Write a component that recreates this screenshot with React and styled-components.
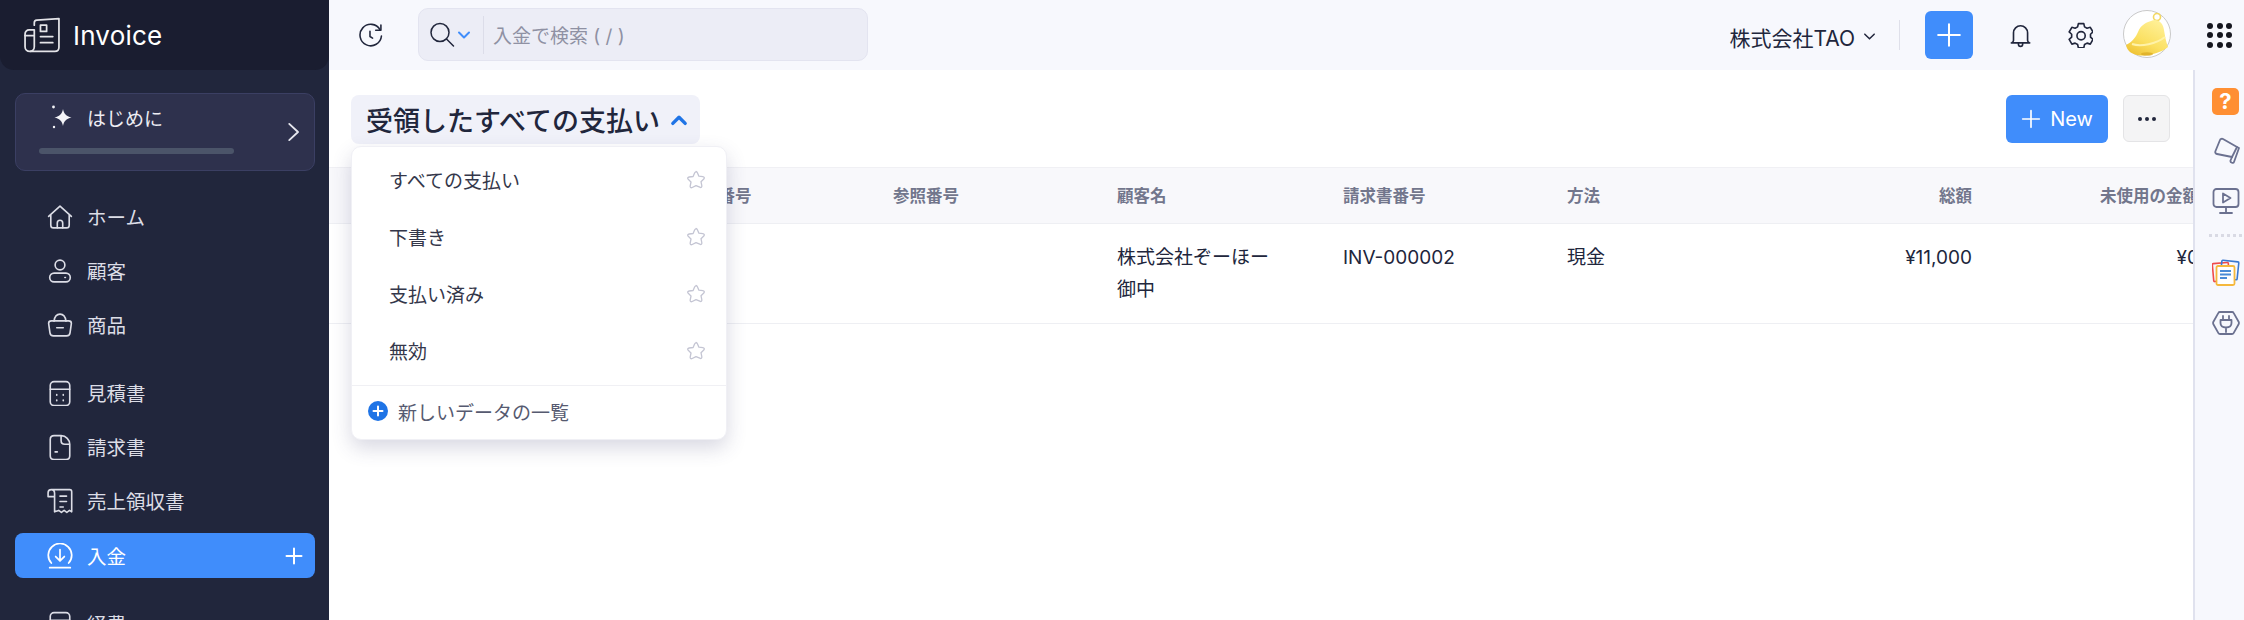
import React from "react";
import styled, { createGlobalStyle } from "styled-components";

const FONT = `Inter, "Noto Sans CJK JP", sans-serif`;

const Global = createGlobalStyle`
  html, body { margin: 0; padding: 0; height: 620px; overflow: hidden; background: #fff; }
  body { font-family: ${FONT}; }
  * { box-sizing: border-box; }
`;

const Shell = styled.div`
  display: grid; grid-template-columns: 329px 1fr; width: 2244px; height: 620px; overflow: hidden;
`;

/* ---------- sidebar ---------- */
const Sidebar = styled.aside`
  background: #21263c; color: #e6e7ee; height: 620px; overflow: hidden; display: flex; flex-direction: column;
`;
const Brand = styled.div`
  height: 70px; flex: none; background: #1a1d30; border-radius: 0 0 14px 14px;
  display: flex; align-items: center; padding-left: 23px; gap: 12px;
  color: #fff; font-size: 26px; letter-spacing: 0.2px;
`;
const StartCard = styled.div`
  margin: 23px 14px 0 15px; height: 78px; flex: none; border-radius: 10px;
  background: #2e314d; border: 1px solid #3b3f63; position: relative;
  display: flex; flex-direction: column; padding: 11px 0 0 23px;
`;
const StartTitle = styled.div`
  display: flex; align-items: center; gap: 13px; padding-left: 11px; height: 24px; font-size: 19px; color: #eeeef4;
`;
const Progress = styled.div`
  margin-top: 19px; width: 195px; height: 6px; border-radius: 3px; background: #4b5469;
`;
const StartArrow = styled.span`
  position: absolute; right: 11px; top: 28px; display: flex;
`;
const Nav = styled.nav`
  margin: 23px 14px 0 15px; display: flex; flex-direction: column; gap: 9px;
`;
const NavGap = styled.div`height: 5px;`;
const NavItem = styled.div`
  height: 45px; flex: none; border-radius: 8px; display: flex; align-items: center;
  padding-left: 32px; gap: 14px; font-size: 19.5px; color: ${p => (p.$active ? "#fff" : "#dcdde6")};
  background: ${p => (p.$active ? "#408dfb" : "transparent")};
  margin-top: ${p => (p.$active ? 1 : 0)}px;
  position: relative;
`;
const NavPlus = styled.span`
  position: absolute; right: 12px; top: 14px; display: flex;
`;

/* ---------- main ---------- */
const Main = styled.div`display: flex; flex-direction: column; min-width: 0; height: 620px;`;
const Topbar = styled.header`
  height: 70px; flex: none; background: #f7f8fd; display: flex; align-items: center; padding-left: 29px;
`;
const SearchBox = styled.div`
  margin-left: 35px; width: 450px; height: 53px; margin-top: -1px; border-radius: 10px; background: #ecedf6; border: 1px solid #e3e4f0;
  display: flex; align-items: center; padding-left: 9px; color: #8f91a3; font-size: 19px;
`;
const SearchDivider = styled.span`
  width: 1px; height: 38px; background: #dcdde9; margin: 0 9px 0 11px;
`;
const TopRight = styled.div`
  margin-left: auto; display: flex; align-items: center; height: 100%;
`;
const OrgName = styled.div`
  display: flex; align-items: center; gap: 7px; font-size: 21px; color: #21263c; margin-top: 3px;
`;
const TopDivider = styled.span`
  width: 1px; height: 30px; background: #dfe0ea; margin: 0 25px 0 22px;
`;
const QuickAdd = styled.button`
  width: 48px; height: 48px; border: 0; padding: 0; border-radius: 6px; background: #408dfb;
  display: flex; align-items: center; justify-content: center;
`;
const TopIcon = styled.span`
  display: flex; width: ${p => p.$w}px; justify-content: center; margin-left: ${p => p.$ml || 0}px;
`;
const Avatar = styled.span`
  width: 48px; height: 48px; margin-left: 30px; display: flex; margin-top: -2px;
`;
const AppsGrid = styled.span`
  margin: 0 12px 0 36px; display: grid; grid-template-columns: repeat(3, 6px); gap: 3.5px;
  span { width: 6px; height: 6px; border-radius: 50%; background: #15161f; display: block; }
`;

const Body = styled.div`display: flex; flex: 1; min-height: 0;`;
const Content = styled.main`flex: 1; min-width: 0; position: relative; overflow: hidden; background: #fff;`;
const Rail = styled.aside`
  width: 51px; flex: none; background: #f7f8fd; border-left: 2px solid #e0e2ee;
  display: flex; flex-direction: column; align-items: center; padding-top: 18px; padding-left: 12px;
`;
const RailIcon = styled.span`display: flex; margin-top: ${p => p.$mt || 0}px;`;
const RailDots = styled.span`
  width: 33px; margin-top: 19px; border-top: 3px dotted #d9dae4; height: 0; display: block;
`;

const PageHead = styled.div`
  height: 97px; display: flex; align-items: flex-start; padding: 25px 23px 0 22px;
`;
const TitleButton = styled.div`
  height: 49px; width: 349px; border-radius: 8px; background: #f0f1f9; display: flex; align-items: center;
  padding-left: 15px; gap: 10px; font-size: 27px; font-weight: 500; color: #21263c; white-space: nowrap;
`;
const NewButton = styled.button`
  margin-left: auto; width: 102px; height: 48px; border: 0; border-radius: 6px; background: #408dfb; color: #fff;
  font: 400 20px ${FONT}; display: flex; align-items: center; justify-content: center; gap: 9px; padding: 0;
`;
const MoreButton = styled.button`
  margin-left: 15px; width: 47px; height: 47px; border: 1px solid #e4e4e6; border-radius: 6px; background: #f4f4f5;
  display: flex; align-items: center; justify-content: center; padding: 0;
`;

const Table = styled.div`width: 1870px;`;
const Row = styled.div`
  display: grid; grid-template-columns: 340px 224px 224px 226px 224px 224px 181px 227px;
  align-items: ${p => (p.$head ? "center" : "start")};
  height: ${p => (p.$head ? 57 : 100)}px;
  background: ${p => (p.$head ? "#f8f8fb" : "#fff")};
  border-top: ${p => (p.$head ? "1px solid #f0f0f4" : "0")};
  border-bottom: 1px solid #eeeff3;
`;
const Head = styled.div`
  font-size: 16.5px; font-weight: 600; color: #72768c; white-space: nowrap; padding-bottom: 2px;
  text-align: ${p => (p.$right ? "right" : "left")};
`;
const Cell = styled.div`
  font-size: 19px; line-height: 32px; color: #21263c; padding-top: 18px;
  text-align: ${p => (p.$right ? "right" : "left")};
  ${p => p.$narrow && "width: 170px;"}
`;

const Dropdown = styled.div`
  position: absolute; left: 22px; top: 76px; width: 376px; height: 294px; background: #fff; border-radius: 10px;
  border: 1px solid #f0f0f5; box-shadow: 0 8px 20px rgba(60, 60, 110, 0.2);
  display: flex; flex-direction: column; padding-top: 4px;
`;
const DropItem = styled.div`
  height: 57px; flex: none; display: flex; align-items: center; justify-content: space-between;
  padding: 0 20px 0 37px; font-size: 19px; color: #34374a;
`;
const DropFoot = styled.div`
  margin-top: 6px; border-top: 1px solid #f0f0f4; flex: 1; display: flex; align-items: center; padding: 0 0 3px 16px;
  gap: 10px; font-size: 19px; color: #565a70;
`;

/* ---------- icons ---------- */
const S = ({ size = 24, w, h, vb = "0 0 24 24", sw = 1.6, color = "currentColor", children }) => (
  <svg width={w || size} height={h || size} viewBox={vb} fill="none" stroke={color} strokeWidth={sw} strokeLinecap="round" strokeLinejoin="round">
    {children}
  </svg>
);
const LogoIcon = () => (
  <S w={38} h={38} vb="0 0 37 37" sw={1.7} color="#e4e4e8">
    <path d="M11 9V6.5c0-1.6.9-2.5 2.4-2.6L35 2.5v28c0 2.5-1.5 4-4 4H7.500" />
    <path d="M11 29V13.500H6c-2.300 0-4 1.700-4 4V30c0 2.700 2 4.500 4.500 4.500s4.500-2 4.500-4.500v-1z" />
    <path d="M2 19h8.500" />
    <rect x="17" y="9" width="6" height="6" />
    <path d="M17 20h12M17 26h12" />
  </S>
);
const Sparkle = () => (
  <svg width="24" height="26" viewBox="0 0 24 26" fill="#f4f4f8">
    <path d="M13 5c1 5 3 7 8.500 8.500C16 15 14 17 13 22c-1-5-3-7-8.500-8.500C10 12 12 10 13 5z" />
    <circle cx="3.500" cy="3" r="1.400" />
    <circle cx="4" cy="23" r="1.200" />
  </svg>
);
const NAV = 26;
const HomeI = () => (
  <S size={NAV} sw={1.5}><path d="M1.500 11.500 12 2l10.500 9.500M3.500 9.800V19.500c0 1.700 1 2.500 2.500 2.500h12c1.500 0 2.500-.8 2.500-2.500V9.800" /><path d="M9.500 22v-4.500a2.500 2.500 0 0 1 5 0V22" /></S>
);
const UserI = () => (
  <S size={NAV} sw={1.5}><circle cx="12" cy="6.500" r="4.500" /><rect x="2.500" y="14" width="19" height="8" rx="4" /><path d="M16.500 18h.5" /></S>
);
const BasketI = () => (
  <S size={NAV} sw={1.5}><path d="M6.500 8.500C7 4.500 9 2 12 2s5 2.500 5.500 6.500" /><path d="M1.500 10.500c0-1.500 1-2.300 2.500-2.300h16c1.500 0 2.500.8 2.500 2.300l-1.200 8.500c-.2 1.900-1.300 3-3.300 3H6c-2 0-3.100-1.100-3.300-3l-1.200-8.500z" /><path d="M9 14.500h6" /></S>
);
const CalcI = () => (
  <S size={NAV} sw={1.5}><rect x="3" y="1.500" width="18" height="22" rx="3.500" /><path d="M3 8.500h18M9 13.500v.6M15 13.500v.6M9 18.500v.6M15 18.500v.6" /></S>
);
const FileI = () => (
  <S size={NAV} sw={1.5}><path d="M13 1.500H6.500C4.500 1.500 3 2.800 3 5v15c0 2.200 1.500 3.500 3.500 3.500h11c2 0 3.500-1.300 3.500-3.500V9.500c0-4-3.500-8-8-8zM13 1.500v4.500c0 2 1.500 3.500 3.500 3.500H21" /><path d="M7.500 16.500h2" /></S>
);
const ReceiptI = () => (
  <S size={NAV} sw={1.5}><path d="M6 1.500h15c1.100 0 1.800.8 1.800 2v18.500l-2-1.300-2.500 1.800-2.500-1.800-2.500 1.800-2.500-1.800L7 22V5C7 3 6 1.500 4 1.500h2zM4 1.500C2.300 1.500 1 2.700 1 4.300V8h6" /><path d="M12 7.500h6M12 12.500h6M12 17.500h3" /></S>
);
const PayI = () => (
  <S size={NAV} color="#fff" sw={1.6}><path d="M4 18.500A10.800 10.800 0 1 1 20 18.500" /><path d="M12 6v10.500M8 12.500l4 4 4-4" /><path d="M2.500 22.800h19" /></S>
);
const Plus = ({ size = 18, sw = 2, color = "#fff" }) => (
  <svg width={size} height={size} viewBox="0 0 18 18" fill="none" stroke={color} strokeWidth={sw} strokeLinecap="round"><path d="M9 1.500v15M1.500 9h15" /></svg>
);
const Chevron = ({ dir = "right", size = 16, sw = 2, color = "#e6e7ee" }) => {
  const d = { right: "M5 1.500 12 8l-7 6.500", down: "M3 5.500 8 10.500l5-5", up: "M2.500 11 8 5.500 13.500 11" }[dir];
  return <svg width={size} height={size} viewBox="0 0 16 16" fill="none" stroke={color} strokeWidth={sw} strokeLinecap="round" strokeLinejoin="round"><path d={d} /></svg>;
};
const ClockI = () => (
  <S size={25} sw={1.5} color="#21263c"><path d="M21.200 6.500A10.300 10.300 0 1 0 22.500 12.500" /><path d="M22 2v5h-5" /><path d="M11.500 8v5l2.500 1.500" /></S>
);
const SearchI = () => (
  <S size={28} sw={1.5} color="#21263c" vb="0 0 28 28"><circle cx="12" cy="11.500" r="9" /><path d="M18.500 18l7 7" /></S>
);
const Star = () => (
  <svg width="20" height="20" viewBox="0 0 20 20" fill="none" stroke="#c4c5d3" strokeWidth="1.300" strokeLinejoin="round">
    <path d="M10 1.500c.7 0 1.100.5 1.400 1.200l1.500 3.500 3.900.5c1.500.2 2 1.300 1 2.300l-2.800 2.700.8 4c.3 1.400-.7 2.200-2 1.500L10 15.600l-3.800 1.900c-1.300.7-2.300-.1-2-1.500l.8-4-2.800-2.700c-1-1-.5-2.100 1-2.300l3.900-.5 1.500-3.500c.3-.7.700-1.200 1.400-1.200z" />
  </svg>
);
const BellI = () => (
  <S size={26} sw={1.500} color="#21263c"><path d="M6 17V10a6.500 6.500 0 0 1 13 0v7c0 1 .8 1.700 2 2.300H4c1.200-.6 2-1.300 2-2.300z" /><path d="M10.500 20c0 1.500.8 2.500 2 2.500s2-1 2-2.500" /></S>
);
const GearI = () => (
  <S size={26} sw={1.500} color="#21263c"><path d="M10.500 2.500h5l.7 3 2.300 1.300 3-.9 2.500 4.300-2.300 2.100v2.700l2.300 2.100-2.500 4.300-3-.9-2.300 1.300-.7 3h-5l-.7-3-2.300-1.300-3 .9L2 17.100l2.300-2.100v-2.700L2 10.200l2.500-4.300 3 .9 2.300-1.300z" transform="translate(0 -1)" /><circle cx="13" cy="12.700" r="3.800" /></S>
);
const BellAvatar = () => (
  <svg width="48" height="48" viewBox="0 0 48 48">
    <defs>
      <linearGradient id="bg1" x1="0.8" y1="0" x2="0.2" y2="1"><stop offset="0" stopColor="#fff19a" /><stop offset="0.6" stopColor="#fbe062" /><stop offset="1" stopColor="#efc233" /></linearGradient>
    </defs>
    <circle cx="24" cy="24" r="23.500" fill="#fff" stroke="#c9c9c9" />
    <circle cx="34" cy="7" r="3.500" fill="none" stroke="#f4d860" strokeWidth="1.600" />
    <path d="M28 11C34 8 40 12 41 20C42 26 43 32 45 37C38 43 24 47 14 45C9 44 4 41 3 35C9 32 13 27 15 22C18 15 22 13 28 11z" fill="url(#bg1)" />
    <path d="M9 34c9 3 24 0 33-7" fill="none" stroke="#fff2a8" strokeWidth="2" />
    <ellipse cx="24" cy="44" rx="6" ry="1.800" fill="#d9a820" opacity="0.7" />
  </svg>
);
const HelpI = () => (
  <svg width="27" height="27" viewBox="0 0 27 27"><rect width="27" height="27" rx="5" fill="#ff8f33" /><text x="13.500" y="21" fontFamily="Inter, sans-serif" fontSize="22" fontWeight="700" fill="#fff" textAnchor="middle">?</text></svg>
);
const MegaI = () => (
  <S size={28} sw={1.800} color="#6b7190" vb="0 0 28 28"><path d="M11 2 25 10 20 20 5 17C3.500 16.700 3 15.500 3.300 14.500L8 3C8.500 1.800 10 1.500 11 2z" /><path d="M25 10 27 11 22 25c-.5 1.500-4 1-3.500-1.500L20 20" /></S>
);
const ScreenI = () => (
  <S w={28} h={28} sw={1.800} color="#6b7190" vb="0 0 28 28"><rect x="1.500" y="2" width="25" height="18" rx="3" /><path d="M14 20v6M8 26h12" /><path d="M11 6.500 18.500 11 11 15.500z" /></S>
);
const NotebookI = () => (
  <svg width="28" height="28" viewBox="0 0 28 28" fill="none">
    <rect x="1" y="4" width="16" height="18" rx="1" stroke="#ef4b4b" strokeWidth="1.600" transform="rotate(-5 9 13)" />
    <rect x="9" y="2" width="17" height="18" rx="1" stroke="#3a78d0" strokeWidth="1.600" transform="rotate(6 17 11)" />
    <rect x="4.500" y="7" width="18" height="19" rx="1.500" fill="#fff" stroke="#f5b83d" strokeWidth="1.800" />
    <path d="M8 12h11M8 15.500h11M8 19h7" stroke="#4a8bd6" strokeWidth="2" />
  </svg>
);
const HexI = () => (
  <S size={28} sw={1.800} color="#6b7190" vb="0 0 28 28"><path d="M8 3h12c.7 0 1.300.3 1.600.9l5 8.800c.4.800.4 1.800 0 2.600l-5 8.800c-.3.600-.9.900-1.600.9H8c-.7 0-1.300-.3-1.600-.9l-5-8.800c-.4-.8-.4-1.800 0-2.600l5-8.800C6.700 3.300 7.300 3 8 3z" /><path d="M11 7v4M17 7v4M8.500 11h11v3c0 2.500-2 4.500-5.500 4.500S8.500 16.500 8.500 14v-3zM14 18.500V23" /></S>
);

const nav1 = [["ホーム", HomeI], ["顧客", UserI], ["商品", BasketI]];
const nav2 = [["見積書", CalcI], ["請求書", FileI], ["売上領収書", ReceiptI]];
const views = ["すべての支払い", "下書き", "支払い済み", "無効"];

export default function App() {
  return (
    <>
      <Global />
      <Shell>
        <Sidebar>
          <Brand><LogoIcon />Invoice</Brand>
          <StartCard>
            <StartTitle><Sparkle />はじめに</StartTitle>
            <Progress />
            <StartArrow><Chevron size={20} sw={1.500} /></StartArrow>
          </StartCard>
          <Nav>
            {nav1.map(([t, I]) => <NavItem key={t}><I />{t}</NavItem>)}
            <NavGap />
            {nav2.map(([t, I]) => <NavItem key={t}><I />{t}</NavItem>)}
            <NavItem $active><PayI />入金<NavPlus><Plus /></NavPlus></NavItem>
            <NavGap />
            <NavItem><CalcI />経費</NavItem>
          </Nav>
        </Sidebar>
        <Main>
          <Topbar>
            <ClockI />
            <SearchBox>
              <SearchI />
              <Chevron dir="down" size={16} color="#408dfb" />
              <SearchDivider />
              入金で検索 ( / )
            </SearchBox>
            <TopRight>
              <OrgName>株式会社TAO<Chevron dir="down" size={15} sw={1.600} color="#21263c" /></OrgName>
              <TopDivider />
              <QuickAdd><Plus size={26} sw={1.400} /></QuickAdd>
              <TopIcon $w={26} $ml={34}><BellI /></TopIcon>
              <TopIcon $w={26} $ml={34}><GearI /></TopIcon>
              <Avatar><BellAvatar /></Avatar>
              <AppsGrid>{Array.from({ length: 9 }, (_, i) => <span key={i} />)}</AppsGrid>
            </TopRight>
          </Topbar>
          <Body>
            <Content>
              <PageHead>
                <TitleButton>受領したすべての支払い<Chevron dir="up" size={18} sw={3} color="#1f74e6" /></TitleButton>
                <NewButton><Plus size={20} sw={1.500} />New</NewButton>
                <MoreButton>
                  <svg width="20" height="6" viewBox="0 0 20 6" fill="#21263c"><circle cx="3" cy="3" r="2" /><circle cx="10" cy="3" r="2" /><circle cx="17" cy="3" r="2" /></svg>
                </MoreButton>
              </PageHead>
              <Table>
                <Row $head>
                  <Head />
                  <Head>支払い番号</Head>
                  <Head>参照番号</Head>
                  <Head>顧客名</Head>
                  <Head>請求書番号</Head>
                  <Head>方法</Head>
                  <Head $right>総額</Head>
                  <Head $right>未使用の金額</Head>
                </Row>
                <Row>
                  <Cell />
                  <Cell />
                  <Cell />
                  <Cell $narrow>株式会社ぞーほー御中</Cell>
                  <Cell>INV-000002</Cell>
                  <Cell>現金</Cell>
                  <Cell $right>¥11,000</Cell>
                  <Cell $right>¥0</Cell>
                </Row>
              </Table>
              <Dropdown>
                {views.map(v => <DropItem key={v}>{v}<Star /></DropItem>)}
                <DropFoot>
                  <svg width="20" height="20" viewBox="0 0 20 20"><circle cx="10" cy="10" r="10" fill="#1f74e6" /><path d="M10 5.500v9M5.500 10h9" stroke="#fff" strokeWidth="2" strokeLinecap="round" /></svg>
                  新しいデータの一覧
                </DropFoot>
              </Dropdown>
            </Content>
            <Rail>
              <RailIcon><HelpI /></RailIcon>
              <RailIcon $mt={22}><MegaI /></RailIcon>
              <RailIcon $mt={22}><ScreenI /></RailIcon>
              <RailDots />
              <RailIcon $mt={22}><NotebookI /></RailIcon>
              <RailIcon $mt={22}><HexI /></RailIcon>
            </Rail>
          </Body>
        </Main>
      </Shell>
    </>
  );
}
